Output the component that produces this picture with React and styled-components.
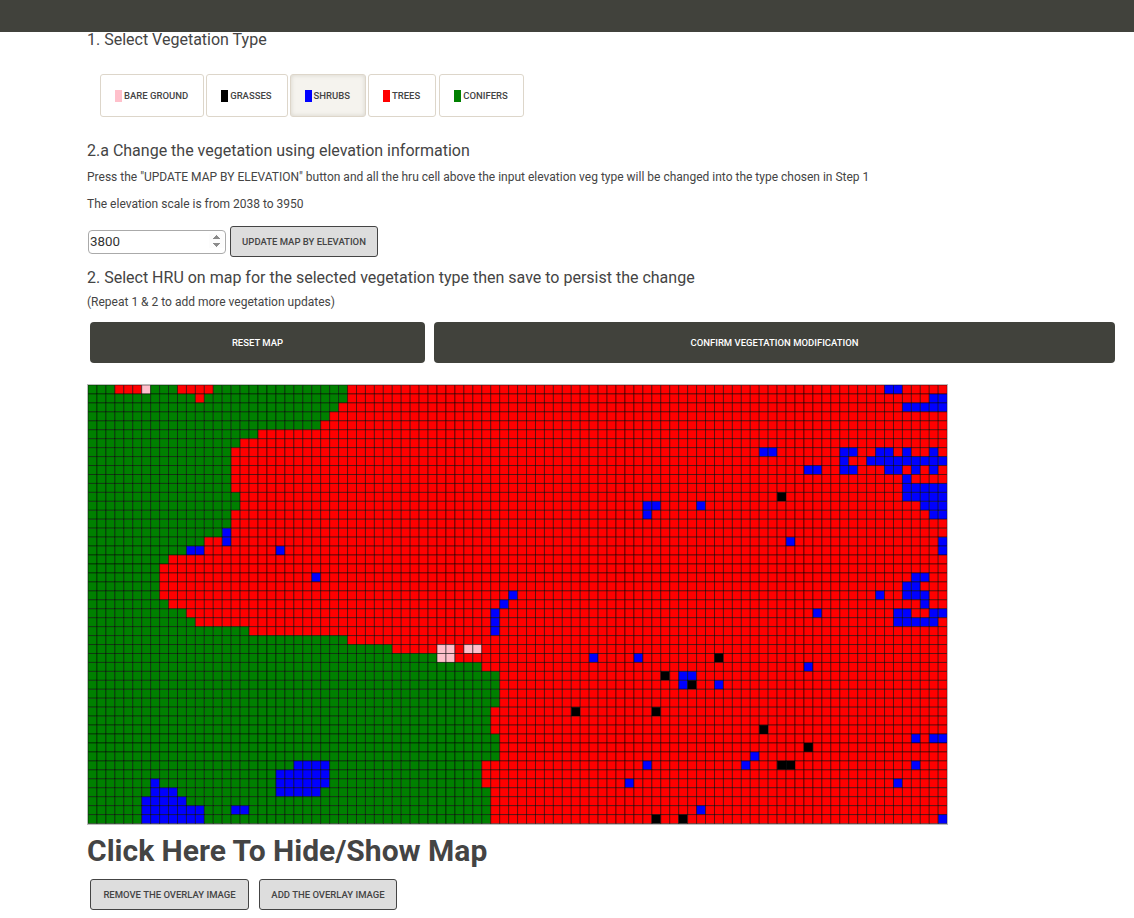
import React from 'react'
import styled, { createGlobalStyle } from 'styled-components'

const GlobalStyle = createGlobalStyle`
    html, body {
        margin: 0;
        padding: 0;
        background: #fff;
        font-family: Roboto, "Liberation Sans", sans-serif;
        color: #444;
    }
`

const TopBar = styled.div`
    height: 32px;
    background: #41423c;
`

const Content = styled.main`
    display: flex;
    flex-direction: column;
    align-items: flex-start;
    padding: 0 19px 0 87px;
`

const StepTitle = styled.h3`
    margin: ${props => props.$top}px 0 0;
    font-size: 16px;
    font-weight: 400;
    line-height: ${props => props.$line || 20}px;
    color: #444;
`

const Note = styled.p`
    margin: ${props => props.$top}px 0 0;
    font-size: 12px;
    line-height: 16px;
    color: #444;
`

const VegRow = styled.div`
    display: flex;
    gap: 2px;
    margin: 27px 0 0 13px;
`

const VegButton = styled.button`
    display: flex;
    align-items: center;
    gap: 2px;
    height: 43px;
    padding: 0 15px 0 14px;
    margin-right: ${props => props.$gap || 0}px;
    background: ${props => props.$active ? '#f5f3ee' : '#fff'};
    border: 1px solid #ddd6ca;
    border-radius: 3px;
    box-shadow: ${props => props.$active ? 'inset 0 0 4px rgba(120, 110, 90, 0.25)' : 'none'};
    font: 500 9.5px Roboto, sans-serif;
    color: #444;
    text-transform: uppercase;
`

const Swatch = styled.span`
    width: 7px;
    height: 12px;
    background: ${props => props.$color};
`

const ElevationRow = styled.div`
    display: flex;
    align-items: center;
    gap: 4px;
    margin: 14px 0 0 1px;
`

const ElevationInput = styled.input`
    box-sizing: border-box;
    width: 138px;
    height: 24px;
    padding: 0 1px;
    border: 1px solid #aaa;
    border-radius: 4px;
    font: 400 13.33px Roboto, sans-serif;
    color: #333;

    &::-webkit-inner-spin-button {
        opacity: 1;
    }
`

const GreyButton = styled.button`
    box-sizing: border-box;
    width: ${props => props.$width}px;
    height: 31px;
    padding: 0;
    background: #ddd;
    border: 1px solid #444;
    border-radius: 3px;
    font: 500 9.5px Roboto, sans-serif;
    color: #444;
    text-transform: uppercase;
`

const ActionRow = styled.div`
    display: grid;
    grid-template-columns: 335px 681px;
    gap: 9px;
    margin: 12px 0 0 3px;
`

const DarkButton = styled.button`
    height: 41px;
    padding: 0;
    background: #41423c;
    border: 0;
    border-radius: 4px;
    font: 500 9.5px Roboto, sans-serif;
    color: #fff;
    text-transform: uppercase;
`

const MapFrame = styled.div`
    margin-top: 21px;
    border: 1px solid #bbb;
    line-height: 0;
`

const ToggleTitle = styled.h1`
    margin: 9px 0 0;
    font-size: 30px;
    font-weight: 700;
    line-height: 34px;
    color: #444;
`

const OverlayRow = styled.div`
    display: flex;
    gap: 10px;
    margin: 11px 0 0 3px;
`

const COLORS = { g: '#008000', r: '#ff0000', b: '#0000ff', k: '#000000', p: '#ffc0cb' }
const CELL = 8.95
const COLS = 96
const ROWS = 49

// last green column + 1 for each row, rest of the row is red
const GREEN_EDGE = [
    29, 29, 28, 27, 26, 19, 17, 16, 16, 16,
    16, 16, 17, 17, 16, 16, 15, 13, 11, 9,
    8, 8, 8, 8, 9, 11, 12, 18, 29, 34,
    39, 44, 46, 46, 46, 46, 45, 45, 45, 46,
    46, 46, 44, 44, 44, 45, 45, 45, 45,
]

// [row, first col, last col, type]
const PATCHES = [
    [0, 3, 5, 'r'], [0, 6, 6, 'p'], [0, 10, 13, 'r'], [1, 12, 12, 'r'],
    [25, 11, 15, 'r'], [26, 12, 12, 'r'], [26, 18, 22, 'r'], [27, 18, 20, 'r'],
    [29, 39, 40, 'p'], [29, 42, 43, 'p'], [30, 39, 40, 'p'],
    [0, 89, 90, 'b'], [1, 94, 95, 'b'], [2, 91, 95, 'b'],
    [7, 75, 76, 'b'], [7, 84, 85, 'b'], [7, 88, 89, 'b'], [7, 91, 91, 'b'], [7, 94, 94, 'b'],
    [8, 84, 84, 'b'], [8, 87, 95, 'b'],
    [9, 80, 81, 'b'], [9, 84, 85, 'b'], [9, 89, 90, 'b'], [9, 92, 92, 'b'], [9, 94, 94, 'b'],
    [10, 91, 91, 'b'], [11, 91, 95, 'b'], [12, 91, 95, 'b'], [12, 77, 77, 'k'],
    [13, 62, 63, 'b'], [13, 68, 68, 'b'], [13, 93, 95, 'b'], [14, 62, 62, 'b'], [14, 94, 95, 'b'],
    [16, 15, 15, 'b'], [17, 15, 15, 'b'], [17, 78, 78, 'b'], [17, 95, 95, 'b'],
    [18, 11, 12, 'b'], [18, 21, 21, 'b'], [18, 95, 95, 'b'],
    [21, 25, 25, 'b'], [21, 92, 93, 'b'], [22, 91, 92, 'b'],
    [23, 47, 47, 'b'], [23, 88, 88, 'b'], [23, 91, 93, 'b'],
    [24, 46, 46, 'b'], [24, 93, 93, 'b'],
    [25, 45, 45, 'b'], [25, 81, 81, 'b'], [25, 90, 91, 'b'], [25, 94, 95, 'b'],
    [26, 45, 45, 'b'], [26, 90, 94, 'b'], [27, 45, 45, 'b'],
    [30, 56, 56, 'b'], [30, 61, 61, 'b'], [30, 70, 70, 'k'],
    [31, 80, 80, 'b'], [32, 64, 64, 'k'], [32, 66, 67, 'b'],
    [33, 66, 66, 'b'], [33, 67, 67, 'k'], [33, 70, 70, 'b'],
    [36, 54, 54, 'k'], [36, 63, 63, 'k'], [38, 75, 75, 'k'],
    [39, 92, 92, 'b'], [39, 94, 95, 'b'], [40, 80, 80, 'k'], [41, 74, 74, 'b'],
    [42, 62, 62, 'b'], [42, 73, 73, 'b'], [42, 77, 78, 'k'], [42, 92, 92, 'b'],
    [44, 60, 60, 'b'], [44, 90, 90, 'b'],
    [42, 23, 26, 'b'], [43, 21, 26, 'b'], [44, 21, 26, 'b'], [45, 21, 25, 'b'],
    [44, 7, 7, 'b'], [45, 7, 9, 'b'], [46, 6, 10, 'b'], [47, 6, 12, 'b'], [47, 16, 17, 'b'],
    [48, 6, 12, 'b'],
    [47, 68, 68, 'b'], [48, 63, 63, 'k'], [48, 66, 66, 'k'], [48, 95, 95, 'b'],
]

const buildCells = () => {
    const grid = GREEN_EDGE.map(edge =>
        Array.from({ length: COLS }, (_, col) => (col < edge ? 'g' : 'r'))
    )
    PATCHES.forEach(([row, from, to, type]) => {
        for (let col = from; col <= to; col++) grid[row][col] = type
    })
    return grid
}

const HruMap = () => {
    const grid = buildCells()
    return (
        <svg width={COLS * CELL} height={ROWS * CELL} viewBox={`0 0 ${COLS * CELL} ${ROWS * CELL}`}>
            {grid.map((cells, row) => cells.map((type, col) => (
                <rect
                    key={`${row}-${col}`}
                    x={col * CELL}
                    y={row * CELL}
                    width={CELL}
                    height={CELL}
                    fill={COLORS[type]}
                    stroke="#000"
                    strokeOpacity="0.5"
                    strokeWidth="1"
                />
            )))}
        </svg>
    )
}

const VEG_TYPES = [
    { label: 'Bare Ground', color: '#ffc0cb' },
    { label: 'Grasses', color: '#000' },
    { label: 'Shrubs', color: '#00f', active: true },
    { label: 'Trees', color: '#f00', gap: 1 },
    { label: 'Conifers', color: '#008000' },
]

const App = () => {
    return (
        <>
            <GlobalStyle />
            <TopBar />
            <Content>
                <StepTitle $top={0} $line={15}>1. Select Vegetation Type</StepTitle>
                <VegRow>
                    {VEG_TYPES.map(veg => (
                        <VegButton key={veg.label} type="button" $active={veg.active} $gap={veg.gap}>
                            <Swatch $color={veg.color} />
                            {veg.label}
                        </VegButton>
                    ))}
                </VegRow>
                <StepTitle $top={24}>2.a Change the vegetation using elevation information</StepTitle>
                <Note $top={8}>Press the "UPDATE MAP BY ELEVATION" button and all the hru cell above the input elevation veg type will be changed into the type chosen in Step 1</Note>
                <Note $top={11}>The elevation scale is from 2038 to 3950</Note>
                <ElevationRow>
                    <ElevationInput type="number" defaultValue="3800" />
                    <GreyButton type="button" $width={148}>Update Map By Elevation</GreyButton>
                </ElevationRow>
                <StepTitle $top={11}>2. Select HRU on map for the selected vegetation type then save to persist the change</StepTitle>
                <Note $top={6}>(Repeat 1 &amp; 2 to add more vegetation updates)</Note>
                <ActionRow>
                    <DarkButton type="button">Reset Map</DarkButton>
                    <DarkButton type="button">Confirm Vegetation Modification</DarkButton>
                </ActionRow>
                <MapFrame>
                    <HruMap />
                </MapFrame>
                <ToggleTitle>Click Here To Hide/Show Map</ToggleTitle>
                <OverlayRow>
                    <GreyButton type="button" $width={159}>Remove The Overlay Image</GreyButton>
                    <GreyButton type="button" $width={138}>Add The Overlay Image</GreyButton>
                </OverlayRow>
            </Content>
        </>
    )
}

export default App
